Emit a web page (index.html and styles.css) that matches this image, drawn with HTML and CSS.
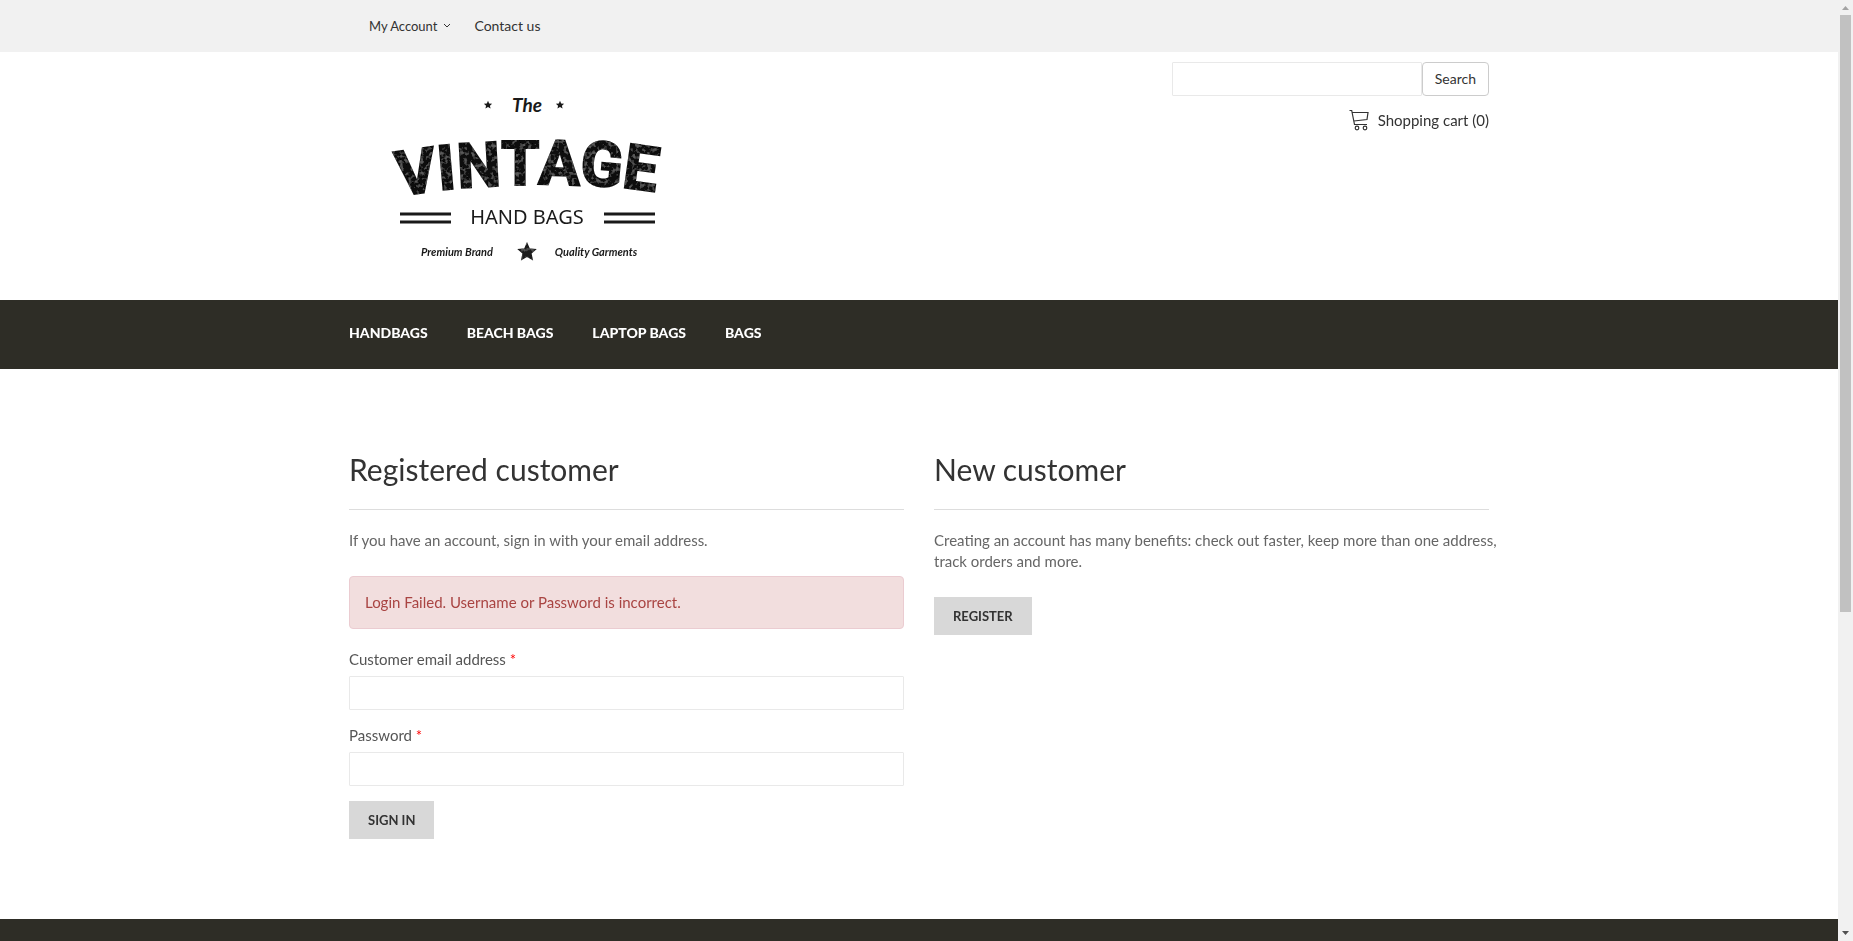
FILE: index.html
```html
<!DOCTYPE html>
<html lang="en">
<head>
<meta charset="utf-8">
<title>The Vintage Hand Bags - Sign in</title>
<link rel="stylesheet" href="styles.css">
</head>
<body>
<div class="page">
  <div class="topbar">
    <nav class="container topbar-links" aria-label="Account">
      <button type="button" class="account-toggle">My Account
        <svg class="chevron" viewBox="0 0 8 6" aria-hidden="true"><path d="M1 1 4 4 7 1"/></svg>
      </button>
      <a class="contact-link" href="#contact">Contact us</a>
    </nav>
  </div>

  <header class="container header">
    <a class="logo" href="#home" aria-label="The Vintage Hand Bags">
      <svg class="logo-art" viewBox="0 0 300 190">
        <defs>
          <filter id="worn" x="0" y="0" width="100%" height="100%">
            <feTurbulence type="fractalNoise" baseFrequency="0.25" numOctaves="3" seed="8" result="noise"/>
            <feColorMatrix in="noise" type="matrix" values="0 0 0 0 0.1  0 0 0 0 0.1  0 0 0 0 0.1  4 0 0 0 -2" result="specks"/>
            <feComposite in="specks" in2="SourceAlpha" operator="in" result="wear"/>
            <feMerge><feMergeNode in="SourceGraphic"/><feMergeNode in="wear"/></feMerge>
          </filter>
          <path id="star" d="M0-10 2.800-3.600 9.800-3.100 4.600 1.600 6.100 8.400 0 5-6.100 8.400-4.600 1.600-9.800-3.100-2.800-3.600Z"/>
        </defs>
        <use href="#star" transform="translate(108 25) scale(.42)"/>
        <use href="#star" transform="translate(180 25) scale(.42)"/>
        <text class="logo-the" x="147" y="32">The</text>
        <g filter="url(#worn)">
          <text class="logo-name" x="19 59 78 121 158 199 241" y="116 110 108 105 104 104 107" rotate="-8 -5 -3 0 2 5 8">VINTAGE</text>
          <use href="#star" transform="translate(147 172)"/>
        </g>
        <path class="logo-rules" d="M20 134H71M20 142H71M224 134H275M224 142H275"/>
        <text class="logo-sub" x="147" y="144">HAND BAGS</text>
        <text class="logo-tag" x="77" y="176">Premium Brand</text>
        <text class="logo-tag" x="216" y="176">Quality Garments</text>
      </svg>
    </a>
    <div class="tools">
      <form class="search" role="search">
        <input class="field search-field" type="text" aria-label="Search products">
        <button class="search-button" type="submit">Search</button>
      </form>
      <a class="cart" href="#cart">
        <svg class="cart-icon" viewBox="0 0 20 22" aria-hidden="true">
          <path d="M.5 1.500H2.700L5.500 15.500H18M3.200 3.500H19L18 10.500 4.800 12"/>
          <circle cx="8" cy="19" r="1.800"/><circle cx="16" cy="19" r="1.800"/>
        </svg>
        <span>Shopping cart (0)</span>
      </a>
    </div>
  </header>

  <div class="navbar">
    <nav class="container navbar-links" aria-label="Categories">
      <a href="#handbags">HANDBAGS</a>
      <a href="#beach">BEACH BAGS</a>
      <a href="#laptop">LAPTOP BAGS</a>
      <a href="#bags">BAGS</a>
    </nav>
  </div>

  <main class="container main">
    <section class="panel">
      <h2 class="panel-title">Registered customer</h2>
      <p class="panel-text">If you have an account, sign in with your email address.</p>
      <div class="alert" role="alert">Login Failed. Username or Password is incorrect.</div>
      <form class="login">
        <div class="group">
          <label for="email">Customer email address <span class="required">*</span></label>
          <input class="field" id="email" type="email">
        </div>
        <div class="group">
          <label for="password">Password <span class="required">*</span></label>
          <input class="field" id="password" type="password">
        </div>
        <button class="button" type="submit">SIGN IN</button>
      </form>
    </section>
    <section class="panel">
      <h2 class="panel-title">New customer</h2>
      <p class="panel-text">Creating an account has many benefits: check out faster, keep more than one address,<br>track orders and more.</p>
      <a class="button" href="#register">REGISTER</a>
    </section>
  </main>

  <footer class="footer"></footer>
</div>
<div class="scrollbar" aria-hidden="true">
  <svg class="scroll-arrow" viewBox="0 0 15 15"><path fill="#a3a3a3" d="M7.500 6 11 10H4Z"/></svg>
  <div class="scroll-track"><div class="scroll-thumb"></div></div>
  <svg class="scroll-arrow" viewBox="0 0 15 15"><path fill="#505050" d="M4 5H11L7.500 9Z"/></svg>
</div>
</body>
</html>
```
FILE: styles.css
```css
* { box-sizing: border-box; }

body {
  margin: 0;
  display: flex;
  height: 100vh;
  overflow: hidden;
  background: #fff;
  color: #666;
  font: 15px/21px Lato, "Liberation Sans", sans-serif;
}

a { color: inherit; text-decoration: none; }
button, input { font-family: inherit; }

.page {
  flex: 1;
  min-width: 0;
  display: flex;
  flex-direction: column;
}

.container {
  width: 100%;
  max-width: 1170px;
  margin: 0 auto;
  padding: 0 15px;
}

.topbar { background: #f1f1f1; color: #333; }
.topbar-links {
  display: flex;
  align-items: center;
  gap: 23px;
  padding: 15px 35px 16px;
}
.account-toggle {
  display: flex;
  align-items: center;
  gap: 6px;
  padding: 0;
  border: 0;
  background: none;
  color: inherit;
  font-size: 13px;
  line-height: 20px;
}
.chevron { width: 8px; height: 6px; fill: none; stroke: #333; }
.contact-link { font-size: 14px; }

.header {
  display: flex;
  justify-content: space-between;
  align-items: flex-start;
}
.logo { padding: 28px 31px 30px; }
.logo-art { display: block; width: 300px; height: 190px; fill: #1a1a1a; text-anchor: middle; }
.logo-the { font: italic bold 19px Lato, sans-serif; }
.logo-name {
  font: 700 62px Roboto, "Liberation Sans", sans-serif;
  fill: #0c0c0c;
  stroke: #0c0c0c;
  stroke-width: 2;
  text-anchor: start;
}
.logo-sub { font: 20px "Noto Sans", sans-serif; }
.logo-tag { font: italic bold 11px Lato, sans-serif; }
.logo-rules { stroke: #1a1a1a; stroke-width: 3; }

.tools {
  display: flex;
  flex-direction: column;
  align-items: flex-end;
  gap: 13px;
  padding-top: 10px;
  color: #333;
}
.search { display: flex; }
.field {
  display: block;
  width: 100%;
  height: 34px;
  padding: 6px 12px;
  border: 1px solid #e9e9e9;
  border-radius: 1px;
  background: #fff;
  font-size: 14px;
}
.search-field { width: 250px; }
.search-button {
  height: 34px;
  padding: 0 12px 2px;
  border: 1px solid #ccc;
  border-radius: 4px;
  background: #fff;
  color: #333;
  font-size: 14px;
}
.cart { display: flex; align-items: center; gap: 9px; }
.cart-icon { width: 20px; height: 22px; fill: none; stroke: #333; stroke-width: 1.2; }

.navbar { background: #2e2d26; color: #fff; font-size: 14px; font-weight: 900; }
.navbar-links { display: flex; gap: 39px; padding: 22px 15px 26px; }

.main {
  display: grid;
  grid-template-columns: 1fr 1fr;
  gap: 30px;
  align-items: start;
  padding: 84px 15px 80px;
}
.panel { min-width: 0; }
.panel-title {
  margin: 0 0 20px;
  padding-bottom: 23px;
  border-bottom: 1px solid #ddd;
  color: #333;
  font-size: 30px;
  line-height: 33px;
  font-weight: 400;
}
.panel-text { margin: 0 0 25px; white-space: nowrap; }
.alert {
  margin-bottom: 20px;
  padding: 15px;
  border: 1px solid #ebccd1;
  border-radius: 4px;
  background: #f2dede;
  color: #a94442;
}
.group { margin-bottom: 15px; }
.group label { display: block; margin-bottom: 6px; color: #555; }
.required { color: #f00; }
.button {
  display: inline-block;
  height: 38px;
  padding: 0 19px;
  border: 0;
  background: #d8d8d8;
  color: #333;
  font-size: 13px;
  line-height: 38px;
  font-weight: 700;
}

.footer { flex: 1; background: #2e2d26; }

.scrollbar {
  display: flex;
  flex-direction: column;
  width: 15px;
  background: #f1f1f1;
}
.scroll-arrow { width: 15px; height: 15px; flex: none; }
.scroll-track { flex: 1; padding: 0 2px; }
.scroll-thumb { height: 65.5%; background: #c1c1c1; }
```
